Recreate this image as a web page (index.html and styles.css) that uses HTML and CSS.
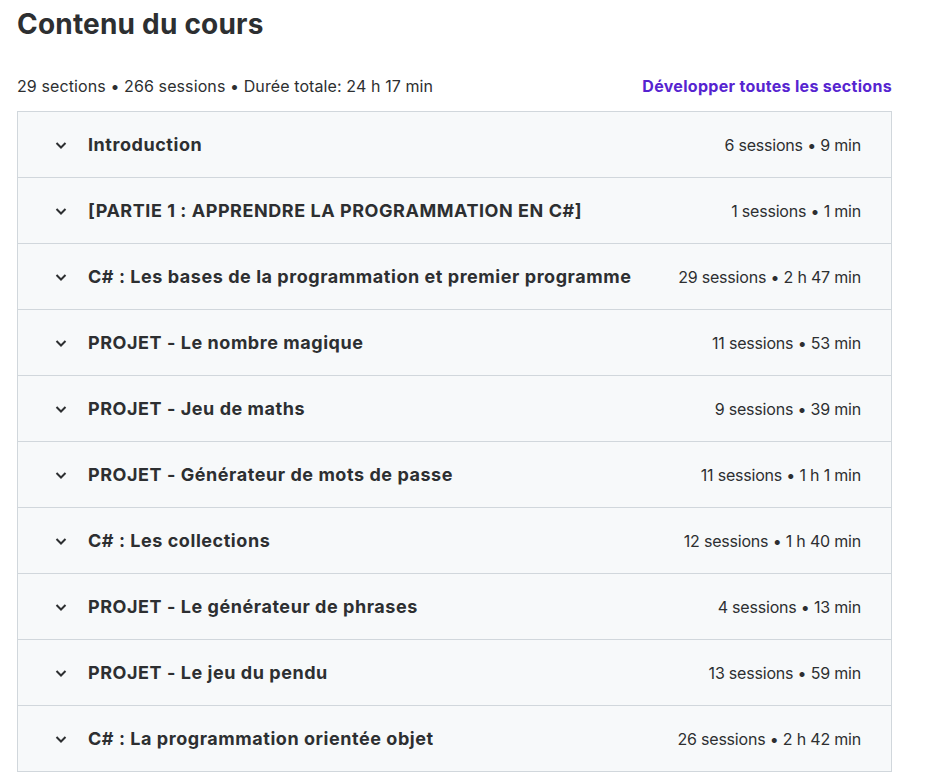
FILE: index.html
```html
<!DOCTYPE html>
<html lang="fr">
<head>
<meta charset="utf-8">
<link rel="stylesheet" href="styles.css">
</head>
<body>
<div class="page">
  <h2 class="title">Contenu du cours</h2>
  <div class="meta">
    <span class="summary">29 sections • 266 sessions • Durée totale: 24 h 17 min</span>
    <button class="expand">Développer toutes les sections</button>
  </div>
  <div class="accordion">
    <div class="row"><span class="chev"><svg viewBox="0 0 16 16" width="16" height="16"><path d="M3.5 6l4.5 4.5L12.5 6" fill="none" stroke="currentColor" stroke-width="2"/></svg></span><span class="name">Introduction</span><span class="info">6 sessions • 9 min</span></div>
    <div class="row"><span class="chev"><svg viewBox="0 0 16 16" width="16" height="16"><path d="M3.5 6l4.5 4.5L12.5 6" fill="none" stroke="currentColor" stroke-width="2"/></svg></span><span class="name">[PARTIE 1 : APPRENDRE LA PROGRAMMATION EN C#]</span><span class="info">1 sessions • 1 min</span></div>
    <div class="row"><span class="chev"><svg viewBox="0 0 16 16" width="16" height="16"><path d="M3.5 6l4.5 4.5L12.5 6" fill="none" stroke="currentColor" stroke-width="2"/></svg></span><span class="name">C# : Les bases de la programmation et premier programme</span><span class="info">29 sessions • 2 h 47 min</span></div>
    <div class="row"><span class="chev"><svg viewBox="0 0 16 16" width="16" height="16"><path d="M3.5 6l4.5 4.5L12.5 6" fill="none" stroke="currentColor" stroke-width="2"/></svg></span><span class="name">PROJET - Le nombre magique</span><span class="info">11 sessions • 53 min</span></div>
    <div class="row"><span class="chev"><svg viewBox="0 0 16 16" width="16" height="16"><path d="M3.5 6l4.5 4.5L12.5 6" fill="none" stroke="currentColor" stroke-width="2"/></svg></span><span class="name">PROJET - Jeu de maths</span><span class="info">9 sessions • 39 min</span></div>
    <div class="row"><span class="chev"><svg viewBox="0 0 16 16" width="16" height="16"><path d="M3.5 6l4.5 4.5L12.5 6" fill="none" stroke="currentColor" stroke-width="2"/></svg></span><span class="name">PROJET - Générateur de mots de passe</span><span class="info">11 sessions • 1 h 1 min</span></div>
    <div class="row"><span class="chev"><svg viewBox="0 0 16 16" width="16" height="16"><path d="M3.5 6l4.5 4.5L12.5 6" fill="none" stroke="currentColor" stroke-width="2"/></svg></span><span class="name">C# : Les collections</span><span class="info">12 sessions • 1 h 40 min</span></div>
    <div class="row"><span class="chev"><svg viewBox="0 0 16 16" width="16" height="16"><path d="M3.5 6l4.5 4.5L12.5 6" fill="none" stroke="currentColor" stroke-width="2"/></svg></span><span class="name">PROJET - Le générateur de phrases</span><span class="info">4 sessions • 13 min</span></div>
    <div class="row"><span class="chev"><svg viewBox="0 0 16 16" width="16" height="16"><path d="M3.5 6l4.5 4.5L12.5 6" fill="none" stroke="currentColor" stroke-width="2"/></svg></span><span class="name">PROJET - Le jeu du pendu</span><span class="info">13 sessions • 59 min</span></div>
    <div class="row"><span class="chev"><svg viewBox="0 0 16 16" width="16" height="16"><path d="M3.5 6l4.5 4.5L12.5 6" fill="none" stroke="currentColor" stroke-width="2"/></svg></span><span class="name">C# : La programmation orientée objet</span><span class="info">26 sessions • 2 h 42 min</span></div>
  </div>
</div>
</body>
</html>
```
FILE: styles.css
```css
* { box-sizing: border-box; }
body {
  margin: 0;
  background: #fff;
  font-family: Inter, "Noto Sans", sans-serif;
  color: #2d2f31;
}
.page {
  padding: 0 38px 0 17px;
}
.title {
  margin: 0;
  padding-top: 6px;
  height: 61px;
  font-size: 28px;
  font-weight: 700;
  letter-spacing: 0.2px;
  line-height: 36px;
}
.meta {
  display: flex;
  justify-content: space-between;
  align-items: center;
  height: 50px;
  font-size: 16px;
}
.summary { letter-spacing: 0.1px; }
.expand {
  border: 0;
  background: none;
  padding: 0;
  font: inherit;
  font-weight: 700;
  font-size: 16px;
  color: #5624d0;
  letter-spacing: 0.3px;
}
.accordion {
  border: 1px solid #d1d7dc;
}
.row {
  display: flex;
  align-items: center;
  height: 66px;
  background: #f7f9fa;
  border-top: 1px solid #d1d7dc;
  padding: 0 30px 0 35px;
}
.row:first-child { border-top: 0; height: 65px; }
.chev {
  display: flex;
  width: 16px;
  margin-right: 19px;
  color: #2d2f31;
}
.name {
  flex: 1;
  font-weight: 700;
  font-size: 18px;
  letter-spacing: 0.55px;
}
.info {
  font-size: 16px;
  letter-spacing: -0.2px;
}
```
